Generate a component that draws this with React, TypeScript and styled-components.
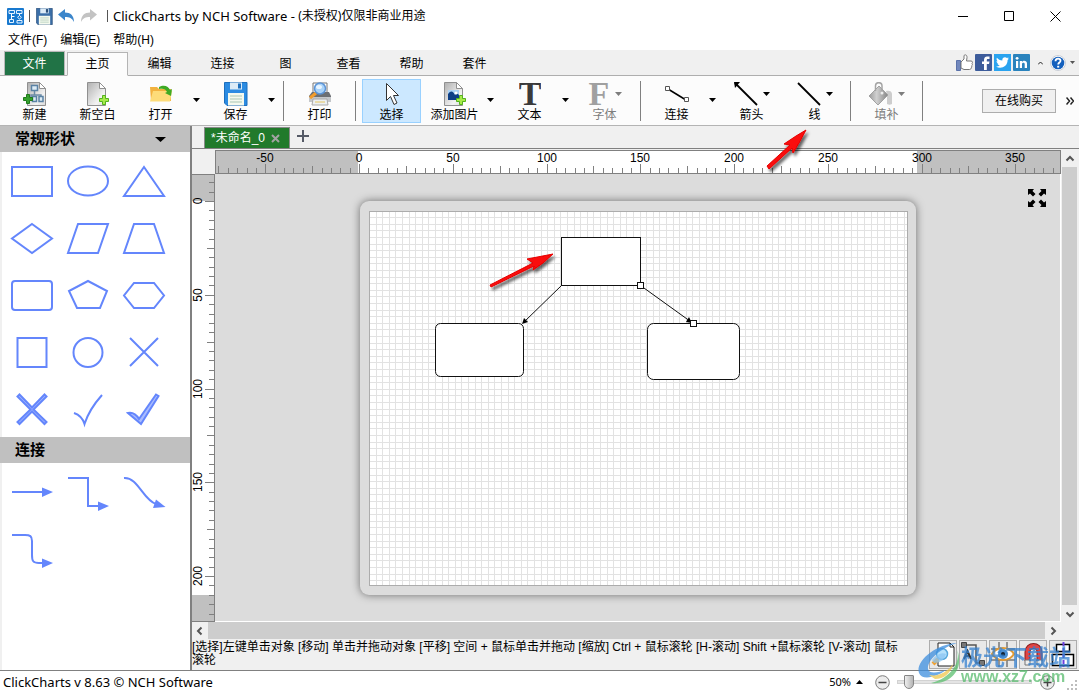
import React from "react";
import styled, { createGlobalStyle, css } from "styled-components";

const GlobalStyle = createGlobalStyle`
  *, *::before, *::after { box-sizing: border-box; }
  body {
    margin: 0;
    background: #fff;
    color: #000;
    font-family: "Liberation Sans", "Noto Sans CJK SC", sans-serif;
    font-size: 12px;
    line-height: 16px;
  }
  button {
    margin: 0;
    padding: 0;
    border: 0;
    background: none;
    color: inherit;
    font: inherit;
    white-space: nowrap;
  }
  svg { display: block; flex: none; }
`;

const uiFont = `"Noto Sans", "Noto Sans CJK SC", sans-serif`;
const shapeBlue = "#6486fc";

/* ---------- window frame ---------- */

const Window = styled.div`
  position: relative;
  display: flex;
  flex-direction: column;
  min-height: 100vh;
  overflow: hidden;
`;

const TitleBar = styled.header`
  display: flex;
  align-items: center;
  height: 32px;
  padding: 0 1px 0 7px;
`;

const QuickAccess = styled.div`
  display: flex;
  align-items: center;
  gap: 5px;
`;

const QuickDivider = styled.span`
  width: 1px;
  height: 12px;
  margin: 0 1px 0 0;
  background: #555;
`;

const WindowTitle = styled.h1`
  display: flex;
  margin: 0 0 0 4px;
  font: 400 13px/18px ${uiFont};
  white-space: pre;
`;

const LicenseNote = styled.span`
  font-size: 12px;
`;

const WindowControls = styled.div`
  display: flex;
  margin-left: auto;
`;

const WindowButton = styled.button`
  display: grid;
  place-items: center;
  width: 46px;
  height: 30px;
`;

const MenuBar = styled.nav`
  display: flex;
  align-items: flex-start;
  gap: 13px;
  height: 18px;
  padding-left: 8px;
`;

/* ---------- ribbon ---------- */

const TabBar = styled.div`
  display: flex;
  align-items: flex-end;
  height: 26px;
  padding-left: 4px;
  background: #f0f0f0;
  border-bottom: 1px solid #aeaeae;
`;

const FileTab = styled.button`
  width: 61px;
  height: 24px;
  margin-right: 2px;
  padding-top: 1px;
  background: #217346;
  border: 1px solid #b9b9b9;
  border-bottom: 0;
  color: #fff;
`;

const RibbonTab = styled.button<{ $active?: boolean }>`
  width: 63px;
  height: 24px;
  padding-top: 2px;
  ${(p) =>
    p.$active &&
    css`
      width: 61px;
      margin-bottom: -1px;
      padding-top: 0;
      background: #fcfcfc;
      border: 1px solid #b4b4b4;
      border-bottom-color: #fcfcfc;
    `}
`;

const SocialBar = styled.div`
  display: flex;
  align-items: center;
  gap: 2px;
  height: 25px;
  margin-left: auto;
  padding-right: 2px;
`;

const SocialLink = styled.a`
  display: block;
  width: 17px;
`;

const SmallButton = styled.button<{ $w: number }>`
  display: grid;
  place-items: center;
  width: ${(p) => p.$w}px;
  height: 18px;
`;

const Toolbar = styled.div`
  display: flex;
  align-items: center;
  gap: 4px;
  height: 50px;
  padding: 0 4px 0 5px;
  background: #fcfcfc;
  border-bottom: 1px solid #b4b4b4;
`;

const ToolGroup = styled.div`
  display: flex;
`;

const ToolButton = styled.button<{ $selected?: boolean }>`
  display: flex;
  flex-direction: column;
  align-items: center;
  gap: 1px;
  width: 59px;
  height: 44px;
  padding-top: 2px;
  border: 1px solid transparent;
  &:disabled { color: #7d7d7d; }
  ${(p) =>
    p.$selected &&
    css`
      background: #cce8ff;
      border-color: #99d1ff;
    `}
`;

const ToolFace = styled.span`
  display: flex;
  align-items: center;
  gap: 5px;
  height: 24px;
`;

const SplitButton = styled.button`
  display: grid;
  place-items: center;
  width: 12px;
  height: 43px;
`;

const ToolDivider = styled.span`
  width: 1px;
  height: 40px;
  margin: 0 2px;
  background: #808080;
`;

const BuyButton = styled.button`
  width: 74px;
  height: 24px;
  margin-left: auto;
  background: #f0f0f0;
  border: 1px solid #adadad;
`;

const OverflowButton = styled.button`
  width: 10px;
  margin-left: 5px;
  display: grid;
  place-items: center;
`;

/* ---------- body ---------- */

const Body = styled.div`
  display: flex;
  flex: 1;
`;

const Palette = styled.aside`
  display: flex;
  flex-direction: column;
  width: 192px;
  flex: none;
  background: #fff;
  border-right: 2px solid #808080;
`;

const PaletteHeader = styled.h2`
  display: flex;
  align-items: center;
  justify-content: space-between;
  height: 26px;
  margin: 0;
  padding: 0 24px 0 15px;
  background: #c0c0c0;
  font-size: 15px;
  font-weight: 700;
  line-height: 20px;
`;

const ShapeGrid = styled.div`
  display: grid;
  grid-template-columns: repeat(3, 56px);
  grid-auto-rows: 57px;
  padding-left: 2px;
  border-left: 2px solid #f0f0f0;
  &:last-child { flex: 1; }
`;

const ShapeButton = styled.button`
  display: grid;
  place-items: center;
`;

const Workspace = styled.main`
  display: flex;
  flex: 1;
  flex-direction: column;
  min-width: 0;
  background: #f0f0f0;
`;

const DocumentTabs = styled.div`
  display: flex;
  align-items: flex-end;
  height: 23px;
  padding-left: 12px;
  border-bottom: 1px solid #808080;
`;

const DocumentTab = styled.div`
  display: flex;
  align-items: center;
  gap: 6px;
  width: 86px;
  height: 21px;
  padding: 0 6px;
  background: #217a2b;
  border: 1px solid #8a8a8a;
  border-bottom: 0;
  color: #fff;
  white-space: nowrap;
`;

const AddTab = styled.button`
  display: grid;
  place-items: center;
  width: 26px;
  height: 24px;
`;

const Stage = styled.div`
  display: grid;
  grid-template-columns: 23px minmax(0, 1fr) 18px;
  grid-template-rows: 24px minmax(448px, 1fr) 17px;
  flex: 1;
  padding-top: 1px;
`;

const TopRuler = styled.div`
  overflow: hidden;
  background: #c0c0c0;
  border: 1px solid #808080;
`;

const SideRuler = styled.div`
  overflow: hidden;
  background: #c0c0c0;
  border: 1px solid #808080;
  border-left: 0;
`;

const Canvas = styled.div`
  position: relative;
  overflow: hidden;
  padding: 27px 0 0 145px;
  background: #dcdcdc;
  border-right: 1px solid #fff;
  border-bottom: 1px solid #fff;
`;

const Sheet = styled.div`
  width: 556px;
  padding: 10px 8px 9px 9px;
  background: #dcdcdc;
  border-radius: 9px;
  box-shadow: 0 0 8px rgba(0, 0, 0, 0.5);
`;

const FullScreenButton = styled.button`
  position: absolute;
  top: 14px;
  right: 13px;
`;

const VerticalBar = styled.div`
  display: flex;
  flex-direction: column;
  grid-column: 3;
  grid-row: 1 / 3;
  padding: 0 2px 0 1px;
`;

const HorizontalBar = styled.div`
  display: flex;
  grid-column: 1 / 4;
  padding-right: 18px;
`;

const ScrollArrow = styled.button`
  display: grid;
  place-items: center;
  flex: none;
  width: 16px;
  height: 17px;
`;

const ScrollThumb = styled.div`
  flex: 1;
  background: #cdcdcd;
`;

const StatusArea = styled.div`
  display: flex;
  align-items: flex-start;
  justify-content: space-between;
  height: 31px;
  padding: 1px 2px 0 0;
`;

const Hint = styled.p`
  width: 712px;
  margin: 0;
  padding-top: 1px;
  line-height: 13px;
`;

const ViewTools = styled.div`
  display: flex;
  flex: none;
  gap: 2px;
`;

const ViewButton = styled.button`
  display: grid;
  place-items: center;
  width: 28px;
  height: 29px;
  background: #e8e8e8;
  border: 1px solid #adadad;
`;

const Footer = styled.footer`
  display: flex;
  align-items: center;
  height: 23px;
  padding-left: 3px;
  border-top: 1px solid #808080;
  font: 13px/18px ${uiFont};
`;

const ZoomControls = styled.div`
  display: flex;
  align-items: center;
  margin-left: auto;
`;

const ZoomLevel = styled.button`
  display: flex;
  align-items: center;
  gap: 5px;
  margin-right: 12px;
  font-size: 11px;
`;

const ZoomSlider = styled.input`
  appearance: none;
  width: 135px;
  height: 16px;
  margin: 0 8px 0 7px;
  background: transparent;
  &::-webkit-slider-runnable-track {
    height: 4px;
    background: #e4e4e4;
    border: 1px solid #d2d2d2;
  }
  &::-webkit-slider-thumb {
    appearance: none;
    width: 10px;
    height: 14px;
    margin-top: -6px;
    background: linear-gradient(90deg, #eee, #b5b5b5);
    border: 1px solid #858585;
    border-radius: 1px 1px 5px 5px;
  }
`;

const Annotation = styled.svg<{ $x: number; $y: number }>`
  position: absolute;
  left: ${(p) => p.$x}px;
  top: ${(p) => p.$y}px;
  pointer-events: none;
`;

const Watermark = styled.div`
  position: absolute;
  right: 8px;
  bottom: 7px;
  display: flex;
  align-items: flex-end;
  pointer-events: none;
  opacity: 0.75;
`;

const WatermarkText = styled.div`
  color: #57bb6d;
  font: 700 16px/18px "Liberation Sans", sans-serif;
`;

const WatermarkName = styled.div`
  color: #3481d0;
  font: 700 22px/26px "Noto Sans CJK SC", sans-serif;
`;

/* ---------- icons ---------- */

const Caret = ({ color = "#000", up = false }: { color?: string; up?: boolean }) => (
  <svg width="7" height="4" viewBox="0 0 7 4">
    <path d={up ? "M0 4h7L3.500 0z" : "M0 0h7L3.500 4z"} fill={color} />
  </svg>
);

const Chevron = ({ turn }: { turn: number }) => (
  <svg width="10" height="10" viewBox="0 0 10 10">
    <path d="M1.500 6.500 5 3l3.500 3.500" fill="none" stroke="#555" strokeWidth="2" transform={`rotate(${turn} 5 5)`} />
  </svg>
);

const AppIcon = () => (
  <svg width="17" height="17" viewBox="0 0 17 17">
    <rect width="17" height="17" rx="1" fill="#1879cf" />
    <path d="M4.500 5v6M4.500 8.500h3M12.500 5v6" stroke="#fff" fill="none" />
    <path d="M2 2.500h5.500v3H2zM2.500 11.500h4v3h-4zM9.500 2.500H15v3H9.500zM10 12.500h5v2.500h-5zM12.500 7.500l2 1.800-2 1.800-2-1.800z" fill="#1879cf" stroke="#e4f2ff" />
  </svg>
);

const DiskIcon = ({ size, fill, dark }: { size: number; fill: string; dark: string }) => (
  <svg width={size} height={size} viewBox="0 0 24 24">
    <path d="M1 .5h22v23H3L.5 21V.5z" fill={fill} stroke={dark} />
    <path d="M6 .5h12v7H6z" fill="#dcebf7" />
    <path d="M14 1.500h3v5h-3z" fill={dark} />
    <path d="M4 11h16v12.500H4z" fill="#f4f9ee" />
    <path d="M6 14h12M6 17h12M6 20h12" stroke="#a9c7b4" />
  </svg>
);

const ArrowIcon = ({ redo }: { redo?: boolean }) => (
  <svg width="17" height="16" viewBox="0 0 17 16">
    <path
      d="M0 6.500 7 1v3.500c5.500 0 9 3 9 9.500-2-4-4.500-5-9-5v3.500z"
      fill={redo ? "#c3c3c3" : "#3c86cb"}
      transform={redo ? "matrix(-1 0 0 1 17 0)" : undefined}
    />
  </svg>
);

const Paper = ({ x = 3 }: { x?: number }) => (
  <g transform={`translate(${x} 0)`}>
    <path d="M.5.5h12l6 6v17H.5z" fill="url(#paper)" stroke="#909090" />
    <path d="M12.500.5v6h6z" fill="#fff" stroke="#909090" />
  </g>
);

const Plus = ({ x, y, dark }: { x: number; y: number; dark?: boolean }) => (
  <path
    transform={`translate(${x} ${y})`}
    d="M3.500.5h3v3h3v3h-3v3h-3v-3h-3v-3h3z"
    fill={dark ? "#35a02d" : "#a6ea4a"}
    stroke={dark ? "#1f7a1a" : "#53b31d"}
  />
);

const PaperGradient = () => (
  <defs>
    <linearGradient id="paper" x1="0" y1="0" x2="1" y2="1">
      <stop offset="0" stopColor="#b0b0b0" />
      <stop offset="0.7" stopColor="#f3f3f3" />
      <stop offset="1" stopColor="#d8d8d8" />
    </linearGradient>
    <linearGradient id="bucket" x1="0" y1="0" x2="1" y2="0">
      <stop offset="0" stopColor="#9a9a9a" />
      <stop offset="0.4" stopColor="#d0d0d0" />
      <stop offset="1" stopColor="#858585" />
    </linearGradient>
  </defs>
);

const NewIcon = () => (
  <svg width="24" height="24" viewBox="0 0 24 24">
    <PaperGradient />
    <Paper x={4} />
    <path d="M11.500 9v4M8 17v-4h10v3" fill="none" stroke="#6c8ba6" strokeWidth="1.500" />
    <path d="M8.500 3.500h6v5h-6zM9.500 14.500h4v5h-4zM16 14.500h4v5h-4z" fill="#dcebf5" stroke="#5a82a5" strokeWidth="1.500" />
    <Plus x={0} y={12} dark />
  </svg>
);

const BlankIcon = () => (
  <svg width="24" height="24" viewBox="0 0 24 24">
    <Paper x={1} />
    <Plus x={13} y={13} />
  </svg>
);

const OpenIcon = () => (
  <svg width="24" height="24" viewBox="0 0 24 24">
    <path d="M1 5h7l2 2h12v12H2z" fill="#f2b23f" />
    <path d="M4 9h19l-2 10.500H1z" fill="#fddc79" />
    <path d="M10 5c5-3 10-.5 11 3l2-1-1 7-6-3 2-1c-1-3-4-4-8-3z" fill="#3faa24" />
  </svg>
);

const PrintIcon = () => (
  <svg width="24" height="24" viewBox="0 0 24 24">
    <path d="M5 1h14v12H5z" fill="#fff" stroke="#777" />
    <path d="M4 10h17l2 4v6H1v-6z" fill="#6c6f73" />
    <path d="M1 15h22v5H1z" fill="#c4c7ca" />
    <path d="M5 17h14l1 6H4z" fill="#eceff1" stroke="#aaa" />
    <path d="M7 20h10" stroke="#e5c661" />
    <path d="m8 11-6 5" stroke="#f29c2c" strokeWidth="3" />
    <circle cx="12" cy="6.500" r="5.500" fill="#a9d3f9" stroke="#5c94d6" strokeWidth="1.500" />
    <ellipse cx="11" cy="5" rx="3" ry="2" fill="#e8f5ff" />
  </svg>
);

const CursorIcon = () => (
  <svg width="24" height="24" viewBox="0 0 24 24">
    <path d="M6.500 1.500v17l4-4 3.500 8 3-1.500-3.500-7.500h5z" fill="#fff" stroke="#333" />
  </svg>
);

const AddPictureIcon = () => (
  <svg width="24" height="24" viewBox="0 0 24 24">
    <Paper x={1} />
    <path d="M5 8h11v10H5z" fill="#a9d2f7" />
    <path d="M5 12c3-4 5-3 7 1 1-2 3-1 4 0v5H5z" fill="#0d3f86" />
    <circle cx="13" cy="11" r="1.500" fill="#fff" />
    <Plus x={13} y={13} />
  </svg>
);

const LetterIcon = ({ letter, color }: { letter: string; color: string }) => (
  <svg width="22" height="24" viewBox="0 0 22 24" aria-hidden="true">
    <text x="11" y="23" textAnchor="middle" fontFamily="Liberation Serif, serif" fontWeight="700" fontSize="34" fill={color}>
      {letter}
    </text>
  </svg>
);

const ConnectIcon = () => (
  <svg width="24" height="24" viewBox="0 0 24 24">
    <path d="m3 7 18 11" stroke="#000" strokeWidth="1.500" />
    <path d="M.5 4.500h4v4h-4zM19.500 15.500h4v4h-4z" fill="#fff" stroke="#555" />
  </svg>
);

const LineIcon = ({ arrow }: { arrow?: boolean }) => (
  <svg width="24" height="24" viewBox="0 0 24 24">
    <path d="m1 1 22 22" stroke="#000" strokeWidth="1.800" />
    {arrow && <path d="M0 0h6L1 6z" fill="#000" />}
  </svg>
);

const FillIcon = () => (
  <svg width="24" height="24" viewBox="0 0 24 24">
    <path d="M17 9c3-1 6 0 6 3v10c-2 1-3 1-5 0v-9z" fill="#cdcdcd" />
    <path d="m10 4 9 9-10 10L0 14z" fill="url(#bucket)" stroke="#a2a2a2" />
    <path d="M6.500 9V4c0-4.500 6.500-4.500 6.500 0v6" fill="none" stroke="#a5a5a5" strokeWidth="1.500" />
    <circle cx="13" cy="11" r="1.500" fill="#eee" />
  </svg>
);

const ThumbIcon = () => (
  <svg width="17" height="17" viewBox="0 0 17 17">
    <path d="M.5 6.500h4v10h-4z" fill="#7288bd" stroke="#5b72aa" />
    <path d="M5 8l3-3V1.500c2-1.500 3 0 3 2L10.500 7H15c1.500 0 2 1.500 1 2.500.8 1 .3 2-.4 2.400.5 1 0 1.800-.6 2 .2 1-.5 1.600-1.500 1.600H8L5 14z" fill="#fff" stroke="#777" />
  </svg>
);

const FacebookIcon = () => (
  <svg width="17" height="17" viewBox="0 0 17 17">
    <rect width="17" height="17" rx="1" fill="#3d5c9b" />
    <path d="M9 16V10H7V7.500h2V6c0-2.500 1.500-3.500 3-3.500h2.500V5H13c-1 0-1.200.5-1.200 1.200v1.300h2.700L14 10h-2.200v6z" fill="#fff" />
  </svg>
);

const TwitterIcon = () => (
  <svg width="17" height="17" viewBox="0 0 17 17">
    <rect width="17" height="17" fill="#2aa3ef" />
    <path d="M15 4.500c-.5.3-1 .4-1.500.4.500-.4.900-.8 1-1.400-.5.300-1 .5-1.600.6A2.700 2.700 0 0 0 8.300 6.500C6 6.400 4.200 5.300 2.900 3.700c-.7 1.300-.3 2.700.8 3.500-.4 0-.8-.1-1.200-.3 0 1.300.9 2.300 2.100 2.600-.4.100-.8.100-1.200 0 .4 1.100 1.300 1.800 2.500 1.800A5.400 5.400 0 0 1 2 12.500c4.500 2.800 11.600.6 11.600-6.500.6-.4 1-.9 1.400-1.500z" fill="#fff" />
  </svg>
);

const LinkedInIcon = () => (
  <svg width="17" height="17" viewBox="0 0 17 17">
    <rect width="17" height="17" rx="1" fill="#2a83bd" />
    <path d="M3 7h2.200v7H3zM6.800 7H9v1c1.200-1.800 5-1.600 5 1.700V14h-2.300v-3.800c0-2-2.700-1.800-2.700 0V14H6.800z" fill="#fff" />
    <circle cx="4.100" cy="4.300" r="1.400" fill="#fff" />
  </svg>
);

const HelpIcon = () => (
  <svg width="16" height="16" viewBox="0 0 16 16">
    <circle cx="8" cy="8" r="7.500" fill="#fff" stroke="#c9ced6" />
    <circle cx="8" cy="8" r="6.300" fill="#1460bd" />
    <path d="M5.500 6.300C5.500 2.700 10.800 3 10.500 6c-.2 1.500-2.300 1.600-2.300 3.500" fill="none" stroke="#fff" strokeWidth="1.800" />
    <path d="M7.200 10.800h2v1.800h-2z" fill="#fff" />
  </svg>
);

const FullScreenIcon = () => (
  <svg width="20" height="20" viewBox="0 0 20 20">
    {[0, 90, 180, 270].map((a) => (
      <path key={a} transform={`rotate(${a} 10 10)`} d="M1 1h6L5.500 3l3 3L6 8.500l-3-3L1 7z" />
    ))}
  </svg>
);

const SignIcon = ({ plus }: { plus?: boolean }) => (
  <svg width="15" height="15" viewBox="0 0 15 15">
    <circle cx="7.500" cy="7.500" r="6.800" fill="#ececec" stroke="#7c7c7c" />
    <path d={plus ? "M3.500 7.500h8M7.500 3.500v8" : "M3.500 7.500h8"} stroke="#444" strokeWidth="1.500" />
  </svg>
);

const PreviewIcon = () => (
  <svg width="26" height="27" viewBox="0 0 26 27">
    <path d="M8 2h12l4 4v19H8z" fill="#fff" stroke="#222" />
    <path d="M20 2v4h4z" fill="#fff" stroke="#222" />
    <path d="m8 18-5 5" stroke="#f0a030" strokeWidth="4" />
    <circle cx="12" cy="13" r="5.500" fill="#b5e1fb" stroke="#58a8dc" strokeWidth="1.500" />
  </svg>
);

const SnapIcon = () => (
  <svg width="26" height="27" viewBox="0 0 26 27">
    <path d="M4 4h12v18h6" fill="none" stroke="#555" strokeWidth="1.500" />
    <path d="M1.500 1.500h5v5h-5zM19.500 19.500h5v5h-5z" fill="#777" stroke="#444" />
    <path d="m4 18 3.500-8L11 18M5 15h5" fill="none" stroke="#333" strokeWidth="2" />
  </svg>
);

const EyeIcon = () => (
  <svg width="26" height="27" viewBox="0 0 26 27">
    <path d="M9 1v25M17 1v25M1 8h24M1 19h24" stroke="#777" strokeWidth="1.500" />
    <path d="M2 13c5-8 17-8 22 0-5 8-17 8-22 0z" fill="#fff" stroke="#e29a34" strokeWidth="2" />
    <circle cx="13" cy="13" r="5" fill="#4c8fd0" />
    <circle cx="13" cy="13" r="2" fill="#123" />
  </svg>
);

const MagnetIcon = () => (
  <svg width="26" height="27" viewBox="0 0 26 27">
    <path d="M7.500 20v-9c0-8 12-8 12 0v9" fill="none" stroke="#8a1b1b" strokeWidth="6" />
    <path d="M7.500 19v-8c0-8 12-8 12 0v8" fill="none" stroke="#e04545" strokeWidth="4" />
    <path d="M5 19h5v5H5zM17 19h5v5h-5z" fill="#eee" stroke="#777" />
  </svg>
);

const AlignIcon = () => (
  <svg width="26" height="27" viewBox="0 0 26 27">
    <path d="M6.500 3.500h13v7h-13zM2.500 13.500h21v11h-21z" fill="#fff" stroke="#000" strokeWidth="1.500" />
    <path d="M13.500 1v25" stroke="#6a3fe0" strokeWidth="2" strokeDasharray="4 2" />
  </svg>
);

/* ---------- data ---------- */

const tabs = ["编辑", "连接", "图", "查看", "帮助", "套件"];

const shapes: [string, React.ReactNode][] = [
  ["矩形", <path d="M2 8h40v29H2z" />],
  ["椭圆", <ellipse cx="22" cy="22" rx="20" ry="14.500" />],
  ["三角形", <path d="M22 8 42 37H2z" />],
  ["菱形", <path d="M22 8 42 22.500 22 37 2 22.500z" />],
  ["平行四边形", <path d="M12 8h30L32 37H2z" />],
  ["梯形", <path d="M12 8h20l10 29H2z" />],
  ["圆角矩形", <rect x="2" y="8" width="40" height="29" rx="3" />],
  ["五边形", <path d="m22 8 19 10-7 17H11L3 18z" />],
  ["六边形", <path d="M12 10h20l10 12.500L32 35H12L2 22.500z" />],
  ["正方形", <path d="M7.500 8h29v29h-29z" />],
  ["圆形", <circle cx="22" cy="22.500" r="14.500" />],
  ["叉", <path d="m8 8 28 28M36 8 8 36" />],
  ["粗叉", <path d="m9.500 7.500 12.500 13 12.500-13 2 2-13 13 13 12.500-2 2L22 24.500 9.500 37l-2-2 13-12.500-13-13z" fill="#a9bcff" />],
  ["勾", <path d="M8 26c6 2 9 6 10.500 11C22 26 28 17 36 8" />],
  ["粗勾", <path d="M6 26c5-1 8 1 11 6L34 7.500l2.500 1.500L19 37z" fill="#a9bcff" />],
];

const connectors: [string, React.ReactNode, string][] = [
  ["直线连接", <path d="M2 22h32" />, "M32 17.500v9.500L43 22z"],
  ["折线连接", <path d="M2 8h20v28h12" />, "M32 31.500v9.500L43 36z"],
  ["曲线连接", <path d="M2 8c14-1 19 22 32 26" />, "M34 29.500 31 38l12.500-1z"],
  ["圆角连接", <path d="M2 8h13c5 0 7 1 7 6v14c0 6 1 8 7 8h6" />, "M32 31.500v9.500L43 36z"],
];

const range = (from: number, to: number) => Array.from({ length: to - from }, (_, i) => from + i);
const step = 9.375;
const tickLength = (n: number) => (n % 10 === 0 ? 9 : n % 5 === 0 ? 7 : 5);

const HorizontalRuler = () => (
  <svg width="100%" height="22">
    <rect x="142" width="559" height="22" fill="#fff" />
    {range(-15, 75).map((n) => {
      const x = Math.round(143 + n * step);
      return (
        <g key={n}>
          <path d={`M${x + 0.5} 22v-${tickLength(n)}`} stroke="#808080" />
          {n % 10 === 0 && (
            <text x={x} y="11" textAnchor="middle" fontSize="12">
              {n * 5}
            </text>
          )}
        </g>
      );
    })}
  </svg>
);

const VerticalRuler = () => (
  <svg width="22" height="100%">
    <rect y="26" width="22" height="394" fill="#fff" />
    {range(-2, 46).map((n) => {
      const y = Math.round(26 + n * step);
      return (
        <g key={n}>
          <path d={`M22 ${y + 0.5}h-${tickLength(n)}`} stroke="#808080" />
          {n % 10 === 0 && (
            <text transform={`translate(10 ${y}) rotate(-90)`} textAnchor="middle" fontSize="12">
              {n * 5}
            </text>
          )}
        </g>
      );
    })}
  </svg>
);

const gridStep = 6.6;

const Diagram = () => (
  <svg width="539" height="375" viewBox="0 0 539 375" role="img" aria-label="流程图">
    <rect width="539" height="375" fill="#fff" />
    <g stroke="#e2e2e2">
      {range(1, 82).map((n) => (
        <path key={n} d={`M${Math.round(n * gridStep) + 0.5} 0v375`} />
      ))}
      {range(1, 57).map((n) => (
        <path key={n} d={`M0 ${Math.floor(n * gridStep) + 0.5}h539`} />
      ))}
    </g>
    <rect x="0.5" y="0.5" width="538" height="374" fill="none" stroke="#acacac" />
    <g fill="#fff" stroke="#111">
      <rect x="192.500" y="26.500" width="79" height="48" />
      <rect x="66.500" y="112.500" width="88" height="53" rx="5" />
      <rect x="278.500" y="112.500" width="92" height="56" rx="6" />
      <path d="m192.500 74.500-38 37M271.500 74.500l50 36" />
    </g>
    <path d="m153 113 2-6 4 4zM323 112l-6-1 3-5z" />
    <g fill="#fff" stroke="#111">
      <rect x="268.500" y="71.500" width="6" height="6" />
      <rect x="321.500" y="109.500" width="6" height="6" />
    </g>
  </svg>
);

const redArrowFilter = (
  <filter id="arrowShadow" x="-20%" y="-20%" width="150%" height="160%">
    <feDropShadow dx="2" dy="3" stdDeviation="1.500" floodOpacity="0.6" />
  </filter>
);

type Tool = {
  label: string;
  icon: React.ReactNode;
  split?: boolean;
  inline?: boolean;
  disabled?: boolean;
  selected?: boolean;
};

const tools: (Tool | null)[] = [
  { label: "新建", icon: <NewIcon /> },
  { label: "新空白", icon: <BlankIcon /> },
  { label: "打开", icon: <OpenIcon />, split: true },
  { label: "保存", icon: <DiskIcon size={24} fill="#2b8be2" dark="#1d6fbd" />, split: true },
  null,
  { label: "打印", icon: <PrintIcon /> },
  null,
  { label: "选择", icon: <CursorIcon />, selected: true },
  { label: "添加图片", icon: <AddPictureIcon />, split: true },
  { label: "文本", icon: <LetterIcon letter="T" color="#3a3a3a" />, split: true },
  { label: "字体", icon: <LetterIcon letter="F" color="#a0a0a0" />, inline: true, disabled: true },
  null,
  { label: "连接", icon: <ConnectIcon />, split: true },
  { label: "箭头", icon: <LineIcon arrow />, inline: true },
  { label: "线", icon: <LineIcon />, inline: true },
  null,
  { label: "填补", icon: <FillIcon />, inline: true, disabled: true },
  null,
];

/* ---------- app ---------- */

export default function App() {
  return (
    <Window>
      <GlobalStyle />
      <TitleBar>
        <QuickAccess>
          <AppIcon />
          <QuickDivider />
          <button aria-label="保存文件"><DiskIcon size={17} fill="#3c6fa8" dark="#2c4f78" /></button>
          <button aria-label="撤销"><ArrowIcon /></button>
          <button aria-label="重做"><ArrowIcon redo /></button>
          <span />
          <QuickDivider />
        </QuickAccess>
        <WindowTitle>
          ClickCharts by NCH Software - <LicenseNote>(未授权)仅限非商业用途</LicenseNote>
        </WindowTitle>
        <WindowControls>
          <WindowButton aria-label="最小化">
            <svg width="10" height="10"><path d="M0 5.500h10" stroke="#000" /></svg>
          </WindowButton>
          <WindowButton aria-label="最大化">
            <svg width="10" height="10"><path d="M.5.5h9v9h-9z" fill="none" stroke="#000" /></svg>
          </WindowButton>
          <WindowButton aria-label="关闭">
            <svg width="11" height="11"><path d="m.5.5 10 10M10.500.5l-10 10" stroke="#000" /></svg>
          </WindowButton>
        </WindowControls>
      </TitleBar>

      <MenuBar>
        <button>文件(F)</button>
        <button>编辑(E)</button>
        <button>帮助(H)</button>
      </MenuBar>

      <TabBar role="tablist">
        <FileTab role="tab">文件</FileTab>
        <RibbonTab role="tab" aria-selected $active>主页</RibbonTab>
        {tabs.map((t) => (
          <RibbonTab key={t} role="tab">{t}</RibbonTab>
        ))}
        <SocialBar>
          <SocialLink href="#like" aria-label="赞"><ThumbIcon /></SocialLink>
          <SocialLink href="#facebook" aria-label="Facebook"><FacebookIcon /></SocialLink>
          <SocialLink href="#twitter" aria-label="Twitter"><TwitterIcon /></SocialLink>
          <SocialLink href="#linkedin" aria-label="LinkedIn"><LinkedInIcon /></SocialLink>
          <SmallButton $w={16} aria-label="折叠功能区">
            <svg width="5" height="4"><path d="m0 3.500 2.500-2.500L5 3.500" fill="none" stroke="#222" /></svg>
          </SmallButton>
          <SmallButton $w={16} aria-label="帮助主题"><HelpIcon /></SmallButton>
          <SmallButton $w={9} aria-label="更多帮助">
            <svg width="5" height="3"><path d="M0 0h5L2.500 3z" fill="#555" /></svg>
          </SmallButton>
        </SocialBar>
      </TabBar>

      <Toolbar>
        {tools.map((tool, i) =>
          tool === null ? (
            <ToolDivider key={i} />
          ) : (
            <ToolGroup key={i}>
              <ToolButton $selected={tool.selected} disabled={tool.disabled}>
                <ToolFace>
                  {tool.icon}
                  {tool.inline && <Caret color={tool.disabled ? "#7d7d7d" : "#000"} />}
                </ToolFace>
                <span>{tool.label}</span>
              </ToolButton>
              {tool.split && (
                <SplitButton aria-label={`${tool.label}选项`}><Caret /></SplitButton>
              )}
            </ToolGroup>
          )
        )}
        <BuyButton>在线购买</BuyButton>
        <OverflowButton aria-label="更多工具">
          <svg width="8" height="8"><path d="m.5.5 3 3.500-3 3.500M4.500.5l3 3.500-3 3.500" fill="none" stroke="#222" strokeWidth="1.500" /></svg>
        </OverflowButton>
      </Toolbar>

      <Body>
        <Palette>
          <PaletteHeader>
            常规形状
            <svg width="11" height="5"><path d="M0 0h11L5.500 5z" /></svg>
          </PaletteHeader>
          <ShapeGrid>
            {shapes.map(([name, drawing]) => (
              <ShapeButton key={name} aria-label={name}>
                <svg width="44" height="44" fill="none" stroke={shapeBlue} strokeWidth="2">{drawing}</svg>
              </ShapeButton>
            ))}
          </ShapeGrid>
          <PaletteHeader>连接</PaletteHeader>
          <ShapeGrid>
            {connectors.map(([name, drawing, head]) => (
              <ShapeButton key={name} aria-label={name}>
                <svg width="44" height="44" fill="none" stroke={shapeBlue} strokeWidth="2">
                  {drawing}
                  <path d={head} fill={shapeBlue} stroke="none" />
                </svg>
              </ShapeButton>
            ))}
          </ShapeGrid>
        </Palette>

        <Workspace>
          <DocumentTabs>
            <DocumentTab>
              *未命名_0
              <button aria-label="关闭文档">
                <svg width="9" height="9"><path d="m1 1 7 7M8 1 1 8" stroke="#a3a3a3" strokeWidth="2" /></svg>
              </button>
            </DocumentTab>
            <AddTab aria-label="新建文档">
              <svg width="12" height="12"><path d="M6 0v12M0 6h12" stroke="#555a66" strokeWidth="2" /></svg>
            </AddTab>
          </DocumentTabs>

          <Stage>
            <span />
            <TopRuler><HorizontalRuler /></TopRuler>
            <VerticalBar>
              <ScrollArrow aria-label="向上滚动"><Chevron turn={0} /></ScrollArrow>
              <ScrollThumb />
              <ScrollArrow aria-label="向下滚动"><Chevron turn={180} /></ScrollArrow>
            </VerticalBar>
            <SideRuler><VerticalRuler /></SideRuler>
            <Canvas>
              <Sheet><Diagram /></Sheet>
              <FullScreenButton aria-label="全屏"><FullScreenIcon /></FullScreenButton>
            </Canvas>
            <HorizontalBar>
              <ScrollArrow aria-label="向左滚动"><Chevron turn={270} /></ScrollArrow>
              <ScrollThumb />
              <ScrollArrow aria-label="向右滚动"><Chevron turn={90} /></ScrollArrow>
            </HorizontalBar>
          </Stage>

          <StatusArea>
            <Hint>
              [选择]左键单击对象 [移动] 单击并拖动对象 [平移] 空间 + 鼠标单击并拖动 [缩放] Ctrl + 鼠标滚轮 [H-滚动] Shift +鼠标滚轮 [V-滚动] 鼠标滚轮
            </Hint>
            <ViewTools>
              <ViewButton aria-label="预览"><PreviewIcon /></ViewButton>
              <ViewButton aria-label="自动连接"><SnapIcon /></ViewButton>
              <ViewButton aria-label="显示网格"><EyeIcon /></ViewButton>
              <ViewButton aria-label="吸附网格"><MagnetIcon /></ViewButton>
              <ViewButton aria-label="对齐"><AlignIcon /></ViewButton>
            </ViewTools>
          </StatusArea>
        </Workspace>
      </Body>

      <Footer>
        <span>ClickCharts v 8.63 © NCH Software</span>
        <ZoomControls>
          <ZoomLevel>50% <Caret up /></ZoomLevel>
          <button aria-label="缩小"><SignIcon /></button>
          <ZoomSlider type="range" aria-label="缩放" min={0} max={100} defaultValue={5} />
          <button aria-label="放大"><SignIcon plus /></button>
          <svg width="24" height="22" fill="#bdbdbd">
            <path d="M20 9h2v2h-2zM16 13h2v2h-2zM20 13h2v2h-2zM12 17h2v2h-2zM16 17h2v2h-2zM20 17h2v2h-2z" />
          </svg>
        </ZoomControls>
      </Footer>

      <Annotation $x={760} $y={122} width="60" height="60">
        <defs>{redArrowFilter}</defs>
        <path d="M46 8 36 14 24 22l6 1L7 44l2 3 23-21 1 5 6-10z" fill="#fa0a0a" stroke="#e60000" filter="url(#arrowShadow)" />
      </Annotation>
      <Annotation $x={484} $y={244} width="80" height="56">
        <path d="M69 10 43 15l6 4L6 41l1 2 43-21-1 4 10-7z" fill="#fa0a0a" stroke="#e60000" filter="url(#arrowShadow)" />
      </Annotation>

      <Watermark>
        <svg width="44" height="44" viewBox="0 0 44 44">
          <path d="M40 1C18 2-2 20 2 31c3 8 18 4 27-3-9 3-17 4-18-1C10 18 24 6 40 1z" fill="#3d8ede" />
          <path d="M40 8c4 12-6 28-26 33 15 2 28-9 28-21 0-5 0-8-2-12z" fill="#5cbf6f" />
          <path d="M15 18c4-6 10-8 14-6-2 6-6 9-12 9z" fill="#8cc6f4" />
          <path d="M12 33c10 2 18-3 24-11-2 9-9 15-18 15z" fill="#efc84c" />
        </svg>
        <div>
          <WatermarkName>极光下载站</WatermarkName>
          <WatermarkText>www.xz7.com</WatermarkText>
        </div>
      </Watermark>
    </Window>
  );
}
